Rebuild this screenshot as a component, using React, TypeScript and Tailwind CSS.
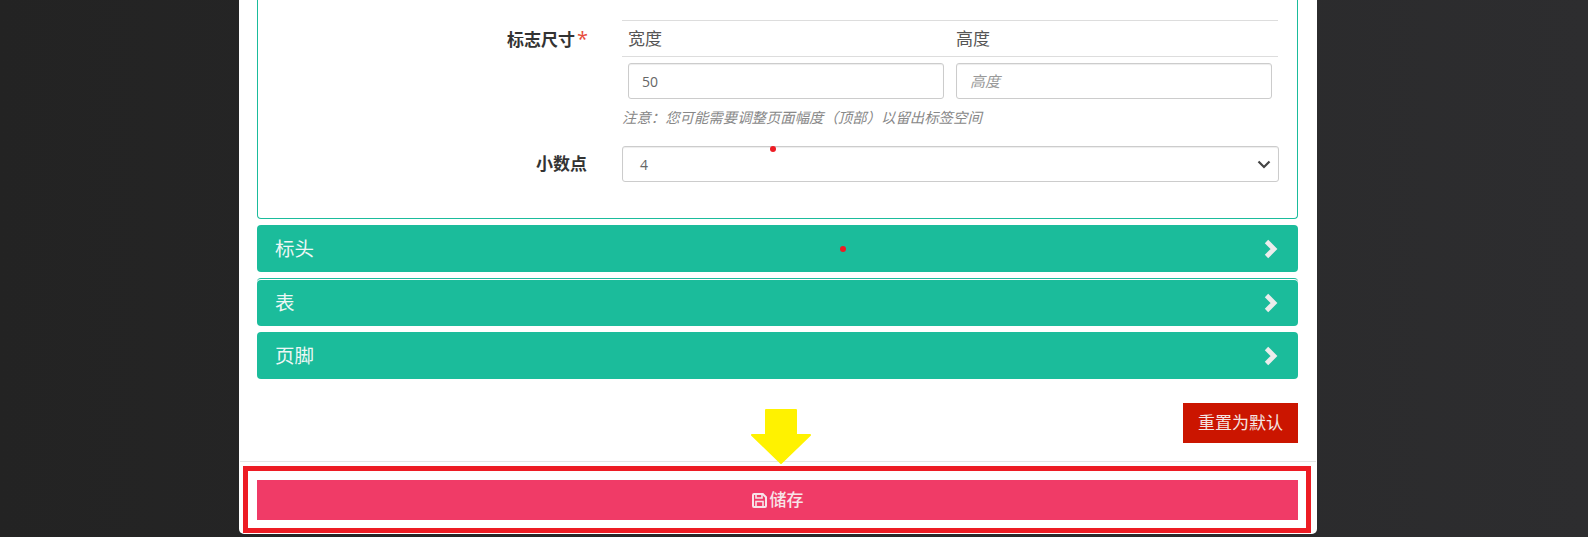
const sections = ["标头", "表", "页脚"];

function SectionBar({ title, lined }: { title: string; lined?: boolean }) {
  return (
    <div className={lined ? "mt-[6px] border-t border-[#1abc9c] rounded-t-[4px] pt-px" : "mt-[6px]"}>
      <div
        className={`${lined ? "h-[46px]" : "h-[47px]"} flex items-center justify-between bg-[#1bbc9b] rounded-[4px] pl-[18px] pr-[20px] text-[19.5px] text-[#eef7f5]`}
      >
        <span>{title}</span>
        <svg width="14" height="20" viewBox="0 0 14 20" fill="none" stroke="#ececec" strokeWidth="4.8">
          <path d="M2.5 2.5 L10 10 L2.5 17.5" />
        </svg>
      </div>
    </div>
  );
}

export default function App() {
  return (
    <div
      className="relative h-[537px] w-full overflow-hidden bg-gradient-to-r from-[#232323] to-[#2d2d2f] pl-[239px]"
      style={{ fontFamily: '"Open Sans", "Noto Sans CJK SC", sans-serif' }}
    >
      <div className="relative w-[1078px] h-[534px] bg-white rounded-b-[5px] flex flex-col">
        <div className="pl-[18px] pr-[19px]">
          <div className="h-[219px] border-x border-b border-[#1abc9c] rounded-b-[4px] pt-[20px]">
            <div className="flex">
              <div className="w-[330px] pt-[5px] text-right text-[17px] leading-[28px] font-bold text-[#333]">
                标志尺寸<span className="ml-[2px] font-normal text-[20px] text-[#e74c3c]">*</span>
              </div>
              <div className="ml-[34px] w-[656px]">
                <div className="border-y border-[#ddd] h-[37px] flex items-center text-[17px] text-[#555]">
                  <span className="w-[328px] pl-[6px]">宽度</span>
                  <span className="pl-[6px]">高度</span>
                </div>
                <div className="flex gap-[12px] px-[6px] pt-[6px]">
                  <div className="w-[316px] h-[36px] border border-[#ccc] rounded-[3px] pl-[13px] flex items-center text-[14px] text-[#666] shadow-[inset_0_1px_1px_rgba(0,0,0,0.075)]">
                    50
                  </div>
                  <div className="w-[316px] h-[36px] border border-[#ccc] rounded-[3px] pl-[13px] flex items-center text-[15px] italic text-[#999] shadow-[inset_0_1px_1px_rgba(0,0,0,0.075)]">
                    高度
                  </div>
                </div>
                <p className="mt-[8px] text-[14.4px] leading-[21px] italic text-[#888]">
                  {"注意\uFF1A您可能需要调整页面幅度\uFF08顶部\uFF09以留出标签空间"}
                </p>
              </div>
            </div>
            <div className="flex mt-[18px]">
              <div className="w-[330px] pt-[4px] pr-px text-right text-[17px] leading-[28px] font-bold text-[#333]">小数点</div>
              <div className="ml-[34px] w-[657px] h-[36px] border border-[#ccc] rounded-[3px] pl-[17px] pr-[7px] flex items-center justify-between text-[14px] text-[#666] shadow-[inset_0_1px_1px_rgba(0,0,0,0.075)]">
                <span>4</span>
                <svg width="14" height="9" viewBox="0 0 14 9" fill="none" stroke="#444" strokeWidth="2.2">
                  <path d="M1.5 1.5 L7 7 L12.5 1.5" />
                </svg>
              </div>
            </div>
          </div>

          {sections.map((title, index) => (
            <SectionBar key={title} title={title} lined={index === 1} />
          ))}

          <div className="mt-[24px] flex justify-end">
            <button className="w-[115px] h-[40px] bg-[#cb1500] text-[17px] text-[#f4e4e2]">重置为默认</button>
          </div>
        </div>

        <div className="mt-[18px] mx-px border-t border-[#e5e5e5] pt-[4px] pl-[3px] pr-[5px]">
          <div className="border-[5px] border-[#ed1c24] h-[67px] pl-[9px] pr-[8px] py-[9px]">
            <button className="w-full h-[40px] bg-[#f03b67] text-[#f7e4e9] text-[17px] font-medium flex items-center justify-center gap-[3px]">
              <svg width="15" height="15" viewBox="0 0 15 15" fill="none" stroke="#f7e4e9" strokeWidth="2">
                <path d="M2 1 H10.8 L14 4.2 V13 Q14 14 13 14 H2 Q1 14 1 13 V2 Q1 1 2 1 Z" />
                <path d="M4 1 V5 H10 V1" strokeWidth="1.6" />
                <path d="M4 14 V8.5 H11 V14" strokeWidth="1.6" />
              </svg>
              储存
            </button>
          </div>
        </div>

        {/* yellow arrow annotation */}
        <svg className="absolute left-[511px] top-[409px]" width="62" height="56" viewBox="0 0 62 56">
          <path
            d="M16 1 L46 1 L46 26 L60 26 L31 54 L2 26 L16 26 Z"
            fill="#fff200"
            stroke="#fff200"
            strokeWidth="2"
            strokeLinejoin="round"
          />
        </svg>
      </div>

      {/* stray red dots */}
      <span className="absolute left-[770px] top-[146px] w-[6px] h-[6px] rounded-full bg-[#ed1c24]" />
      <span className="absolute left-[840px] top-[246px] w-[6px] h-[6px] rounded-full bg-[#ed1c24]" />
    </div>
  );
}
